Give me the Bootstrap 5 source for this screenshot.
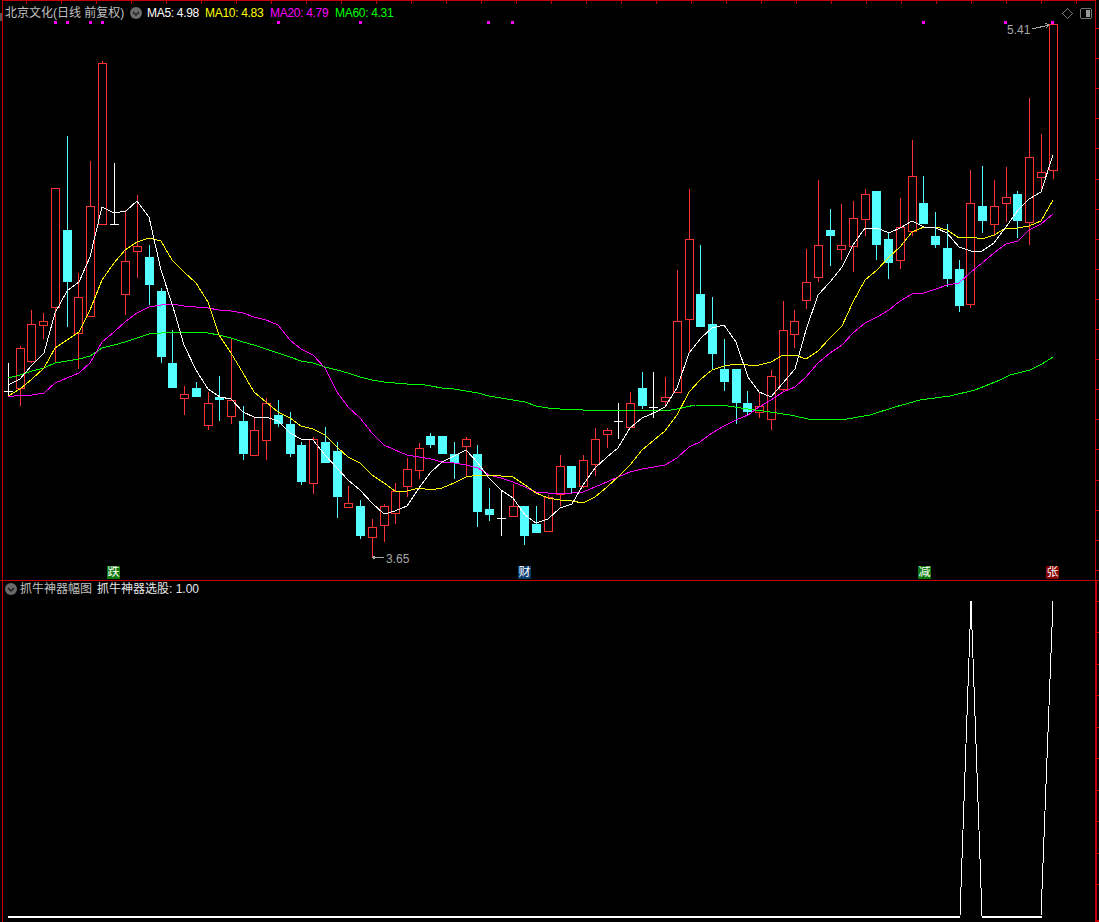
<!DOCTYPE html>
<html lang="zh-CN">
<head>
<meta charset="utf-8">
<title>北京文化 日线</title>
<link href="https://cdn.jsdelivr.net/npm/bootstrap@5.3.0/dist/css/bootstrap.min.css" rel="stylesheet">
<style>
html,body{background:#000;margin:0;height:922px;overflow:hidden}
.chart-page{width:1099px;height:922px;background:#000;font-family:"Liberation Sans","Noto Sans CJK SC",sans-serif;font-size:12px;line-height:14px;color:#c0c0c0}
.pane-main{height:580px}
.pane-sub{height:342px}
.pane-svg{display:block}
.legend-row{left:5px;white-space:nowrap}
.legend-main{top:6px}
.legend-sub{top:582px;left:5px}
.ind-title{width:121px}
.collapse-dot{display:block;width:12px;height:12px;flex:none}
.ma-value{width:59px;margin-right:6px;letter-spacing:-.3px}
.ma-white{color:#fff;margin-left:5px;width:52px;margin-right:6px;letter-spacing:-.3px}
.ma-yellow{color:#ff0}
.ma-magenta{color:#f0f;width:59px;margin-right:6px}
.ma-green{color:#0f0}
.sub-name{margin-left:3px;margin-right:5px}
.sub-value{color:#e8e8e8}
.sign-tag{top:566px;width:13px;height:13px;font-size:12px;line-height:13px;text-align:center;color:#fff;overflow:hidden}
.sign-die{left:107px;background:#0a780a}
.sign-cai{left:518px;background:#0b3c6e}
.sign-jian{left:918px;background:#0a780a}
.sign-zhang{left:1046px;background:#850000}
.price-tag{font-family:"Liberation Sans",sans-serif;font-size:12px;fill:#a8a8a8}
</style>
</head>
<body>
<div class="chart-page position-relative">
  <div class="pane-main" id="mainPane">
    <svg class="pane-svg" id="mainSvg" width="1099" height="580" viewBox="0 0 1099 580" xmlns="http://www.w3.org/2000/svg"></svg>
  </div>
  <div class="pane-sub" id="subPane">
    <svg class="pane-svg" id="subSvg" width="1099" height="342" viewBox="0 580 1099 342" xmlns="http://www.w3.org/2000/svg"></svg>
  </div>

  <div class="legend-row legend-main position-absolute d-flex align-items-center">
    <span class="ind-title">北京文化(日线 前复权)</span>
    <svg class="collapse-dot ms-1" viewBox="0 0 12 12"><circle cx="6" cy="6" r="6" fill="#6a6a6a"/><path d="M3 5l3 3 3-3" fill="none" stroke="#1c1c1c" stroke-width="1.4"/></svg>
    <span class="ma-white">MA5: 4.98</span>
    <span class="ma-value ma-yellow">MA10: 4.83</span>
    <span class="ma-value ma-magenta">MA20: 4.79</span>
    <span class="ma-value ma-green">MA60: 4.31</span>
  </div>

  <div class="legend-row legend-sub position-absolute d-flex align-items-center">
    <svg class="collapse-dot" viewBox="0 0 12 12"><circle cx="6" cy="6" r="6" fill="#6a6a6a"/><path d="M3 5l3 3 3-3" fill="none" stroke="#1c1c1c" stroke-width="1.4"/></svg>
    <span class="sub-name">抓牛神器幅图</span>
    <span class="sub-value">抓牛神器选股: 1.00</span>
  </div>

  <span class="sign-tag sign-die position-absolute">跌</span>
  <span class="sign-tag sign-cai position-absolute">财</span>
  <span class="sign-tag sign-jian position-absolute">减</span>
  <span class="sign-tag sign-zhang position-absolute">张</span>
</div>

<script src="https://cdn.jsdelivr.net/npm/bootstrap@5.3.0/dist/js/bootstrap.bundle.min.js"></script>
<script>
const CANDLES=[
["w",391,391,363,395],["r",348,388,346,406],["r",324,361,310,363],["r",321,325,313,339],["r",188,307,188,363],
["c",230,282,136,327],["r",297,333,273,369],["r",206,316,161,316],["r",63,224,61,224],["w",224,224,163,224],
["r",261,294,210,315],["r",246,251,195,278],["c",257,285,245,305],["c",291,357,288,363],["c",363,388,330,388],
["r",394,398,386,415],["c",388,397,382,397],["r",403,425,392,430],["c",397,400,376,421],["r",400,416,338,424],
["c",421,454,406,460],["r",430,455,417,455],["r",403,440,398,460],["c",415,424,400,427],["c",424,454,412,457],
["c",445,482,442,485],["r",439,483,437,494],["c",442,463,427,463],["c",451,497,442,518],["r",503,507,486,507],
["c",506,536,500,539],["r",527,537,519,558],["r",506,525,504,542],["r",491,513,483,524],["r",469,486,458,497],
["r",448,470,443,479],["c",436,445,433,448],["c",436,454,436,454],["c",454,463,442,479],["r",439,446,437,476],
["c",454,512,445,527],["c",509,515,488,521],["w",518,518,490,536],["r",506,516,484,516],["c",506,536,506,545],
["c",524,533,506,533],["r",497,531,495,531],["r",466,494,455,506],["c",466,488,466,493],["r",460,486,455,488],
["r",439,464,428,476],["r",430,434,428,448],["w",421,421,403,439],["r",403,427,392,427],["c",388,406,372,409],
["w",407,407,372,418],["r",397,401,377,407],["r",321,392,270,392],["r",239,319,189,353],["c",294,327,245,327],
["c",324,354,297,369],["c",369,382,339,391],["c",369,403,369,424],["c",403,412,391,415],["r",406,412,392,418],
["r",376,419,370,430],["r",330,389,301,391],["r",321,334,310,348],["r",282,300,249,309],["r",245,277,180,282],
["c",230,236,209,266],["r",245,249,204,260],["r",218,246,201,272],["r",194,219,189,236],["c",191,245,191,260],
["c",239,263,233,279],["r",227,260,198,269],["r",176,231,140,236],["c",203,224,176,224],["c",236,245,212,248],
["c",248,279,224,287],["c",269,306,260,312],["r",203,304,170,308],["c",206,221,166,233],["r",206,224,180,236],
["r",197,203,167,222],["c",194,221,191,238],["r",157,222,98,245],["r",172,177,134,190],["r",24,170,24,179]
];
const MA5="8,385 20,379 32,365 44,353 55,313 67,291 79,282 90,257 102,207 114,213 126,211 137,201 149,217 161,270 173,307 184,345 196,370 208,389 220,397 231,399 243,412 254,417 266,417 278,421 290,433 301,439 313,440 325,455 337,468 348,480 360,490 372,503 384,514 395,511 407,506 419,488 431,472 442,462 454,456 466,450 478,463 489,478 501,490 513,498 525,515 536,523 548,519 560,508 572,504 583,485 595,468 607,457 618,448 630,428 642,418 654,413 665,407 677,388 689,353 701,338 712,328 724,325 736,342 748,377 759,392 771,397 783,383 795,369 806,330 818,295 830,282 842,267 853,245 865,228 877,228 889,233 900,228 912,221 924,227 936,228 947,233 959,247 971,251 982,251 994,243 1006,227 1018,210 1029,199 1041,192 1053,155";
const MA10="8,396 20,389 32,379 44,368 55,348 67,340 79,332 90,310 102,280 114,263 125,250 137,242 149,238 161,241 172,260 184,272 196,283 208,302 219,335 231,353 243,373 254,392 266,402 278,412 290,418 301,426 313,429 325,435 337,447 348,457 360,463 372,475 384,483 395,491 407,491 419,488 431,490 442,488 454,483 466,477 478,475 489,475 501,476 513,477 525,485 536,493 548,498 560,500 572,501 583,503 595,497 607,487 618,477 630,465 642,450 654,440 665,431 677,415 689,392 701,379 712,370 724,366 736,364 748,365 759,365 771,362 783,355 795,355 806,359 818,351 830,338 842,326 853,302 865,280 877,270 889,257 900,247 912,232 924,227 936,227 947,230 959,238 971,237 982,239 994,235 1006,228 1018,228 1029,226 1041,221 1053,200";
const MA20="8,397 20,395 32,395 44,393 55,383 67,378 79,373 90,363 102,342 114,332 125,322 137,313 149,307 161,305 172,304 184,306 196,307 208,308 219,310 231,311 243,313 254,317 266,320 278,325 290,340 301,349 313,355 325,368 337,392 348,407 360,418 372,433 384,445 395,450 407,455 419,457 431,459 442,462 454,463 466,465 478,468 489,475 501,478 513,482 525,487 536,492 548,493 560,493 572,493 583,492 595,487 607,482 618,477 630,472 642,469 654,467 665,465 677,458 689,447 700,442 712,433 724,426 736,420 748,415 759,407 771,400 783,392 795,387 806,377 818,363 830,353 842,345 853,333 865,323 877,317 889,310 900,301 912,294 924,293 936,289 947,285 959,283 971,272 982,263 994,253 1006,244 1018,241 1029,230 1041,224 1053,214";
const MA60="8,378 20,375 32,371 44,368 55,363 67,361 79,359 90,356 102,348 114,345 125,342 137,338 149,334 161,333 172,332 184,332 196,332 208,333 219,335 231,338 243,342 254,345 266,349 278,353 290,357 301,361 313,363 325,367 337,370 348,373 360,377 372,380 384,382 395,383 407,384 419,384 431,386 442,388 454,389 466,391 478,393 489,396 501,398 513,400 525,402 536,406 548,408 560,409 572,409 583,410 595,410 654,410 665,411 677,409 695,405 728,406 748,409 770,412 790,415 813,420 847,419 870,415 895,407 920,400 950,396 975,390 1000,380 1010,375 1030,370 1042,364 1053,357";
const DOTS=[54,66,89,101,277,359,487,511,922,1004,1051];
const RED="#ff3232",CYAN="#54ffff",FRAME="#c40000";
const out=[];
const rect=(x,y,w,h,f)=>out.push(`<rect x="${x}" y="${y}" width="${w}" height="${h}" fill="${f}"/>`);
/* frame */
rect(2,0,1,580,FRAME);rect(1095,0,1,580,FRAME);rect(2,0,1094,1,FRAME);
for(let x=26;x<1095;x+=35)rect(x,0,1,4,FRAME);
for(let y=28;y<575;y+=30.1)rect(1095,Math.round(y),4,1,FRAME);
rect(0,13,2,8,"#555");
/* candles */
CANDLES.forEach((c,i)=>{
  const x=Math.floor(8.5+i*11.736),[k,t,b,h,l]=c,col=k==="r"?RED:k==="c"?CYAN:"#fff";
  if(h<t)rect(x,h,1,t-h,col);
  if(l>b)rect(x,b,1,l-b,col);
  if(k==="w")rect(x-4,t,9,1,col);
  else if(k==="c")rect(x-4,t,9,Math.max(b-t,2),col);
  else out.push(`<rect x="${x-3.5}" y="${t+.5}" width="8" height="${b-t}" fill="#000" stroke="${col}"/>`);
});
/* moving averages */
[[MA60,"#0f0"],[MA20,"#f0f"],[MA10,"#ff0"],[MA5,"#fff"]].forEach(m=>out.push(`<polyline points="${m[0]}" fill="none" stroke="${m[1]}"/>`));
DOTS.forEach(x=>rect(x,21,3,3,"#f0f"));
/* price marks */
out.push(`<path d="M383.5 557.5H372.5M375.5 555.5L372.5 557.5 375.5 559.5" fill="none" stroke="#a8a8a8"/>`);
out.push(`<text class="price-tag" x="386" y="563">3.65</text>`);
out.push(`<path d="M1032 29L1049 25M1045 23L1049 25 1046 28" fill="none" stroke="#a8a8a8"/>`);
out.push(`<text class="price-tag" x="1007" y="34">5.41</text>`);
/* window icons */
out.push(`<path d="M1067.5 8.5L1072.5 13.5 1067.5 18.5 1062.5 13.5Z" fill="none" stroke="#777"/>`);
out.push(`<rect x="1080.5" y="8.5" width="11" height="10" rx="2" fill="none" stroke="#777"/><rect x="1086" y="10" width="4" height="7" fill="#999"/>`);
const mainSvg=document.getElementById("mainSvg");
mainSvg.setAttribute("shape-rendering","crispEdges");
mainSvg.innerHTML=out.join("");

out.length=0;
rect(0,580,1099,1,FRAME);
rect(2,580,1,342,FRAME);rect(1095,580,2,342,FRAME);
for(let y=600.5;y<900;y+=31.5)rect(1095,Math.round(y),4,1,FRAME);
rect(1095,920,4,2,FRAME);
rect(8,916,952,2,"#fff");rect(982,916,60,2,"#fff");
out.push(`<polyline points="960,916 971,601 982,916" fill="none" stroke="#fff"/><polyline points="1041,916 1053,601" fill="none" stroke="#fff"/>`);
const subSvg=document.getElementById("subSvg");
subSvg.setAttribute("shape-rendering","crispEdges");
subSvg.innerHTML=out.join("");
</script>
</body>
</html>
